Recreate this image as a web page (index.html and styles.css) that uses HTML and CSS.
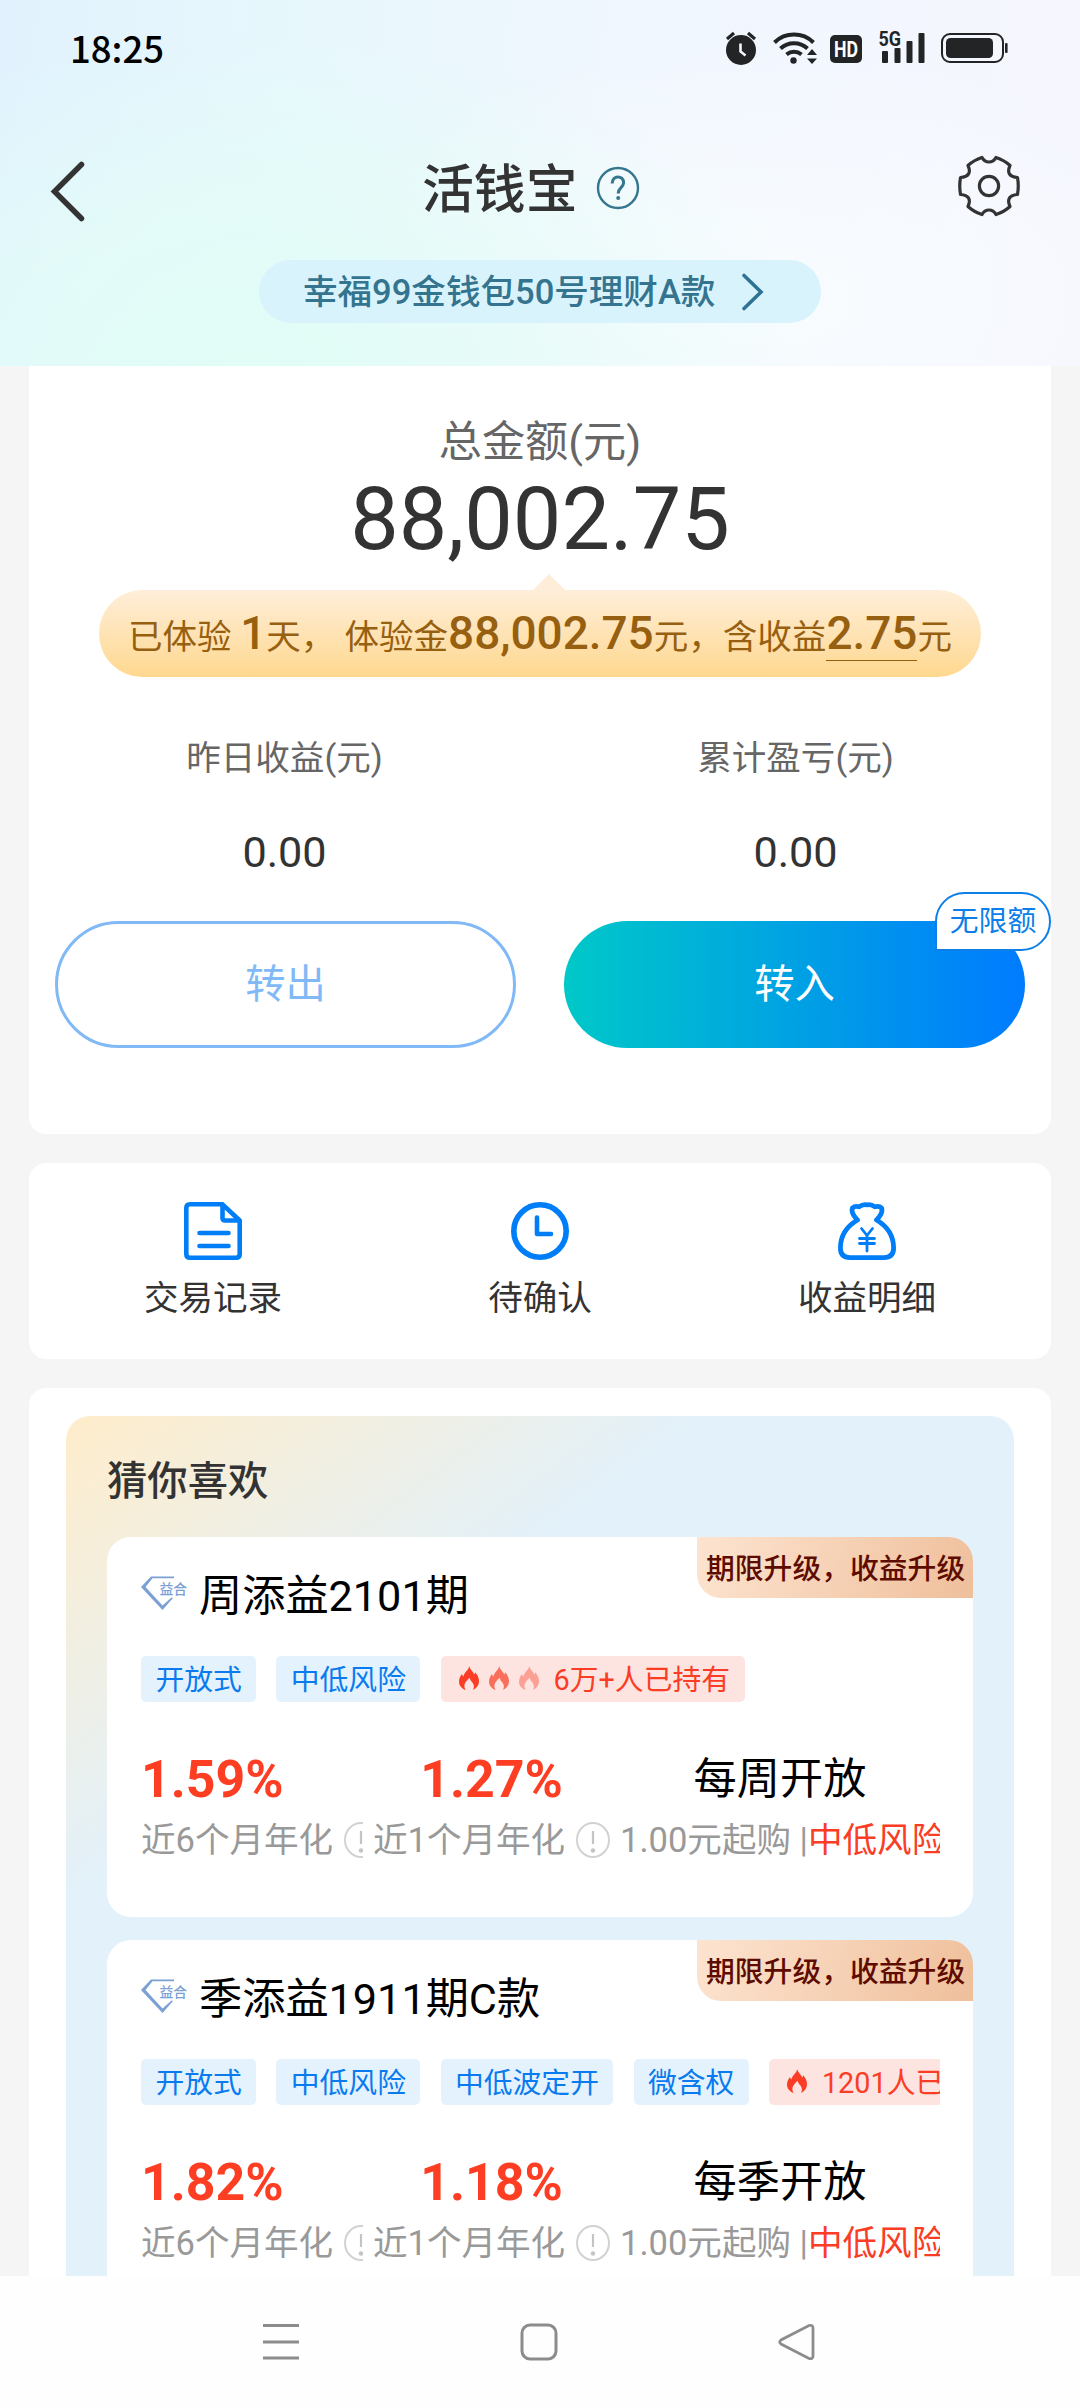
FILE: index.html
```html
<!DOCTYPE html>
<html lang="zh-CN">
<head>
<meta charset="utf-8">
<title>活钱宝</title>
<link rel="stylesheet" href="styles.css">
</head>
<body>
<svg class="defs" width="0" height="0" aria-hidden="true">
  <symbol id="flame" viewBox="0 0 20 24"><path d="M10.200 0C10.800 3.600 14.400 5.600 15.200 8.600C15.800 8 16 7.200 16 6.200C18.600 8.800 20 11.800 20 15C20 19.200 17.400 22.400 14 24C15.400 21.600 15.200 18.600 13.400 16.600C12.200 15.200 11 14.200 10.800 11.800C8.600 13.600 5.600 16.600 5.400 19.600C5.300 21.200 5.800 22.800 6.600 24C2.800 22.600 0 19.600 0 15.400C0 12.200 1.600 10 3 8C3.400 9.400 3.800 10 4.600 10.400C4.800 6.200 9.600 4.600 10.200 0Z" fill="currentColor"/></symbol>
  <symbol id="info" viewBox="0 0 34 36"><ellipse cx="17" cy="18" rx="16" ry="17" fill="none" stroke="#d2d2d2" stroke-width="2"/><path d="M17 9v13" stroke="#c4c4c4" stroke-width="2.200"/><circle cx="17" cy="28.500" r="2.200" fill="#c4c4c4"/></symbol>
  <symbol id="gem" viewBox="0 0 46 34"><path d="M33 0.500H10L0 11L21.500 34L32 22L30.500 21.500L21.500 29.500L4.500 11L11.500 2.300H33Z" fill="#7ba0d4"/><text x="18.500" y="17.500" class="gem-text">益合</text></symbol>
</svg>

<header class="header">
  <div class="status">
    <span class="clock">18:25</span>
    <svg class="status-icons" width="290" height="40" viewBox="722 28 290 40">
      <g fill="#222426">
        <circle cx="741" cy="50" r="15"/>
        <path d="M727 39l7-6M755 39l-7-6" stroke="#222426" stroke-width="3.200"/>
        <path d="M740.500 43.500v8l5 4" fill="none" stroke="#f3f8fe" stroke-width="2.600"/>
        <g fill="none" stroke="#222426" stroke-width="4">
          <path d="M774.500 42.500a28 28 0 0 1 39 0"/><path d="M780.500 48.500a20 20 0 0 1 27 0"/><path d="M786.500 54.500a12 12 0 0 1 15 0"/>
        </g>
        <circle cx="793.500" cy="60.500" r="3.200"/>
        <path d="M812 49l5 6h-10zM812 64l5-5.500h-10z"/>
        <rect x="830" y="35" width="32" height="28" rx="5"/>
        <rect x="882" y="51" width="6" height="12" rx="1"/><rect x="894.500" y="48" width="6" height="15" rx="1"/><rect x="906.500" y="41" width="6" height="22" rx="1"/><rect x="918.500" y="33" width="6" height="30" rx="1"/>
        <rect x="942" y="34" width="61" height="28" rx="8" fill="none" stroke="#222426" stroke-width="2"/>
        <rect x="946" y="38" width="47" height="20" rx="4.500"/>
        <rect x="1005" y="43" width="2.600" height="10" rx="1"/>
      </g>
      <text x="834" y="57" class="hd" textLength="24" lengthAdjust="spacingAndGlyphs">HD</text>
      <text x="878.500" y="46" class="fiveg" textLength="22.500" lengthAdjust="spacingAndGlyphs">5G</text>
    </svg>
  </div>
  <div class="titlebar">
    <svg class="back" width="40" height="66" viewBox="48 159 40 66"><path d="M81.500 164.500L54.500 191.500L81.500 218.500" fill="none" stroke="#333" stroke-width="5.500" stroke-linecap="round"/></svg>
    <h1 class="title">活钱宝</h1>
    <svg class="help" width="44" height="44" viewBox="0 0 44 44"><circle cx="22" cy="22" r="20" fill="none" stroke="#35768f" stroke-width="2.400"/><path d="M16.200 17.500C16 8.500 28 9 27.600 17C27.400 21.500 22.400 21.500 22.200 27.500" fill="none" stroke="#35768f" stroke-width="3"/><circle cx="22.200" cy="32" r="2" fill="#35768f"/></svg>
    <svg class="gear" width="64" height="64" viewBox="-32 -32 64 64"><g fill="none" stroke="#333" stroke-width="3.200" stroke-linejoin="round"><circle r="9.600"/><path d="M-7 -28.500Q-4.500 -24 0 -24T7 -28.500Q15 -26 21 -20.500Q18.500 -15 20.500 -12T28.500 -8.500Q30 0 28.500 8.500Q22.500 9 20.500 12T21 20.500Q15 26 7 28.500Q4.500 24 0 24T-7 28.500Q-15 26 -21 20.500Q-18.500 15 -20.500 12T-28.500 8.500Q-30 0 -28.500 -8.500Q-22.500 -9 -20.500 -12T-21 -20.500Q-15 -26 -7 -28.500Z"/></g></svg>
  </div>
  <div class="product-pill">
    <span>幸福99金钱包50号理财A款</span>
    <svg width="24" height="40" viewBox="0 0 24 40"><path d="M3 3.500L20 20L3 36.500" fill="none" stroke="#2f7394" stroke-width="3.600" stroke-linecap="round"/></svg>
  </div>
</header>

<main class="content">
  <section class="card balance">
    <div class="total-label">总金额(元)</div>
    <div class="total">88,002.75</div>
    <div class="bubble">
      <p>已体验 <b>1</b>天，<i></i>体验金<b>88,002.75</b>元，含收益<b class="under">2.75</b>元</p>
    </div>
    <div class="stats">
      <div><span class="stat-label">昨日收益(元)</span><span class="stat-value">0.00</span></div>
      <div><span class="stat-label">累计盈亏(元)</span><span class="stat-value">0.00</span></div>
    </div>
    <div class="actions">
      <div class="btn btn-out">转出</div>
      <div class="btn btn-in">转入<span class="limit">无限额</span></div>
    </div>
  </section>

  <section class="card menu">
    <div class="menu-item">
      <svg width="58" height="58" viewBox="0 0 58 58"><g fill="none" stroke="#007ef8" stroke-width="4.600" stroke-linejoin="round"><path d="M38 2.300H6Q2.300 2.300 2.300 6V52Q2.300 55.700 6 55.700H52Q55.700 55.700 55.700 52V18.500L38.500 2.300V16Q38.500 18.500 41 18.500H55"/><path d="M15.500 31H44.500M15.500 44H44.500" stroke-linecap="round"/></g></svg>
      <span>交易记录</span>
    </div>
    <div class="menu-item">
      <svg width="58" height="58" viewBox="0 0 58 58"><g fill="none" stroke="#007ef8"><circle cx="29" cy="29" r="26.200" stroke-width="5.600"/><path d="M26 15.500V32H40" stroke-width="4.600" stroke-linecap="round" stroke-linejoin="round"/></g></svg>
      <span>待确认</span>
    </div>
    <div class="menu-item">
      <svg width="58" height="58" viewBox="0 0 58 58"><g fill="none" stroke="#007ef8" stroke-width="4.800" stroke-linecap="round" stroke-linejoin="round"><path d="M19.500 18Q12.500 11 14.500 6Q17 3.500 21 4.800Q25 1.800 29 2.800Q33 1.800 37 4.800Q41 3.500 43.500 6Q45.500 11 38.500 18Q55.600 28 55.600 46Q55.600 55.600 46 55.600H12Q2.400 55.600 2.400 46Q2.400 28 19.500 18Z"/><path d="M23.500 26.500L29 33.500L34.500 26.500M29 33.500V49M21.500 36.500H36.500M21.500 41.500H36.500" stroke-width="2.800"/></g></svg>
      <span>收益明细</span>
    </div>
  </section>

  <section class="card recommend">
    <div class="panel">
      <h2 class="panel-title">猜你喜欢</h2>

      <article class="product">
        <div class="ribbon">期限升级，收益升级</div>
        <div class="name"><svg width="46" height="34"><use href="#gem"/></svg><span>周添益2101期</span></div>
        <div class="tags">
          <span class="tag">开放式</span><span class="tag">中低风险</span>
          <span class="tag hot"><svg class="flame"><use href="#flame"/></svg><svg class="flame f2"><use href="#flame"/></svg><svg class="flame f3"><use href="#flame"/></svg><span>6万+人已持有</span></span>
        </div>
        <div class="metrics">
          <div class="metric first"><b>1.59%</b><span class="cap">近6个月年化<svg class="info"><use href="#info"/></svg></span></div>
          <div class="metric"><b>1.27%</b><span class="cap">近1个月年化<svg class="info"><use href="#info"/></svg></span></div>
          <div class="metric"><em>每周开放</em><span class="cap">1.00元起购 |<span class="risk">中低风险</span></span></div>
        </div>
      </article>

      <article class="product">
        <div class="ribbon">期限升级，收益升级</div>
        <div class="name"><svg width="46" height="34"><use href="#gem"/></svg><span>季添益1911期C款</span></div>
        <div class="tags">
          <span class="tag">开放式</span><span class="tag">中低风险</span><span class="tag">中低波定开</span><span class="tag">微含权</span>
          <span class="tag hot"><svg class="flame"><use href="#flame"/></svg><span>1201人已持有</span></span>
        </div>
        <div class="metrics">
          <div class="metric first"><b>1.82%</b><span class="cap">近6个月年化<svg class="info"><use href="#info"/></svg></span></div>
          <div class="metric"><b>1.18%</b><span class="cap">近1个月年化<svg class="info"><use href="#info"/></svg></span></div>
          <div class="metric"><em>每季开放</em><span class="cap">1.00元起购 |<span class="risk">中低风险</span></span></div>
        </div>
      </article>
    </div>
  </section>
</main>

<nav class="navbar">
  <svg width="38" height="38" viewBox="0 0 38 38"><path d="M1 2.500H37M1 19H37M1 35H37" stroke="#8c8c8c" stroke-width="3"/></svg>
  <svg width="38" height="38" viewBox="0 0 38 38"><rect x="2" y="2" width="34" height="34" rx="8" fill="none" stroke="#8c8c8c" stroke-width="3"/></svg>
  <svg width="38" height="38" viewBox="0 0 38 38"><path d="M3 17Q0.500 19 3 21L31 35.500Q35 36.500 35 33V5Q35 1.500 31 2.500Z" fill="none" stroke="#8c8c8c" stroke-width="2.800"/></svg>
</nav>
</body>
</html>
```
FILE: styles.css
```css
* { box-sizing: border-box; margin: 0; padding: 0; }
body {
  width: 1080px;
  height: 2408px;
  overflow: hidden;
  display: flex;
  flex-direction: column;
  background: #f5f5f5;
  color: #333;
  font-family: Roboto, "Noto Sans CJK SC", sans-serif;
  font-size: 34.560px;
}
svg { display: block; flex: none; }
.defs { display: none; }

.header {
  height: 366px;
  flex: none;
  background:
    radial-gradient(ellipse 560px 340px at 250px 370px, #e1fdf6 0%, rgba(226, 253, 246, .6) 50%, rgba(226, 253, 246, 0) 100%),
    radial-gradient(ellipse 500px 260px at 760px 300px, #f8fcfe 0%, rgba(248, 252, 254, 0) 100%),
    linear-gradient(97deg, #e1f2fe 0%, #e6f7fc 25%, #f0f7fe 55%, #f6f6fe 100%);
}
.status {
  height: 100px;
  padding: 28px 68px 0 70px;
  display: flex;
  justify-content: space-between;
}
.clock {
  font-family: "Noto Sans CJK SC", sans-serif;
  font-weight: 500;
  font-size: 36.500px;
  line-height: 40px;
  color: #000;
}
.hd { font: 700 21.500px Roboto, sans-serif; fill: #fff; }
.fiveg { font: 700 20px Roboto, sans-serif; fill: #222426; }
.titlebar {
  height: 160px;
  padding: 0 59px 0 48px;
  display: grid;
  grid-template-columns: 374px 156px 62px 1fr;
  align-items: start;
}
.back { margin-top: 59px; }
.title { margin-top: 51px; font-size: 51.840px; line-height: 80px; font-weight: 500; white-space: nowrap; }
.help { margin: 66px 0 0 18px; }
.gear { margin: 54px 0 0; justify-self: end; }
.product-pill {
  width: 562px;
  height: 63px;
  margin-left: 259px;
  padding: 0 56px 0 44px;
  border-radius: 32px;
  background: #d9f3fd;
  color: #35748f;
  font-weight: 500;
  display: flex;
  align-items: center;
  justify-content: space-between;
  white-space: nowrap;
}
.product-pill span { margin-bottom: 6px; }

.content { height: 1910px; overflow: hidden; padding: 0 29px; display: flex; flex-direction: column; gap: 29px; }
.card { background: #fff; border-radius: 17px; flex: none; }
.balance { height: 768px; border-radius: 0 0 17px 17px; text-align: center; padding-top: 51px; }
.total-label { font-size: 43.200px; line-height: 52px; color: #666; }
.total { font-size: 86.400px; line-height: 101px; }
.bubble {
  position: relative;
  width: 882px;
  height: 87px;
  margin: 20px auto 0 70px;
  border-radius: 44px;
  background: linear-gradient(#feeed9, #ffd88f);
  color: #975f10;
}
.bubble::before {
  content: "";
  position: absolute;
  left: 433px;
  top: -16px;
  border: 17px solid transparent;
  border-top: 0;
  border-bottom: 17px solid #feeed9;
}
.bubble p { padding-left: 29px; text-align: left; line-height: 87px; white-space: nowrap; }
.bubble b { font-size: 45.900px; font-weight: 500; }
.bubble i { display: inline-block; width: 9px; }
.under { border-bottom: 1.500px solid #975f10; }
.stats { display: grid; grid-template-columns: 1fr 1fr; margin-top: 55px; }
.stat-label, .stat-value { display: block; }
.stat-label { line-height: 52px; color: #666; }
.stat-value { margin-top: 43px; font-size: 43.200px; line-height: 52px; }
.actions { display: flex; gap: 48px; padding: 0 26px; margin-top: 42px; }
.btn { width: 461px; height: 127px; border-radius: 64px; font-size: 40.320px; line-height: 127px; }
.btn-out { border: 3px solid #80b9f6; color: #80b9f6; line-height: 121px; }
.btn-in { position: relative; background: linear-gradient(90deg, #00c8c8, #007bff); color: #fff; }
.limit {
  position: absolute;
  right: -26px;
  top: -29px;
  width: 116px;
  height: 59px;
  border: 2px solid #0d7fe8;
  border-radius: 30px 30px 30px 0;
  background: #fff;
  color: #0d7fe8;
  font-size: 28.800px;
  line-height: 54px;
}

.menu { height: 196px; display: grid; grid-template-columns: 327px 327px 327px; justify-content: center; padding-top: 39px; }
.menu-item { display: flex; flex-direction: column; align-items: center; }
.menu-item span { margin-top: 12px; line-height: 52px; }

.recommend { height: 1000px; padding: 28px 37px 0; }
.panel {
  height: 972px;
  border-radius: 24px;
  padding: 37px 41px 0;
  background: linear-gradient(143deg, #ffedcb 0, #e3f1fa 385px);
}
.panel-title { font-size: 40.320px; line-height: 58px; font-weight: 500; }
.product {
  position: relative;
  height: 380px;
  margin: 26px 0 0;
  padding: 30px 33.500px 0 34px;
  background: #fff;
  border-radius: 24px;
  white-space: nowrap;
}
.product + .product { margin-top: 23px; }
.ribbon {
  position: absolute;
  right: 0;
  top: 0;
  width: 276px;
  height: 61px;
  padding-left: 9px;
  border-radius: 0 24px 0 24px;
  background: linear-gradient(110deg, #fde4d0, #efbf9b);
  color: #5e0b00;
  font-size: 28.800px;
  line-height: 64px;
  font-weight: 500;
}
.name { display: flex; align-items: center; gap: 12px; color: #000; font-size: 43.200px; line-height: 60px; }
.name svg { margin-top: -8px; }
.gem-text { font: 500 13.800px "Noto Sans CJK SC", sans-serif; fill: #7ba0d4; }
.tags { display: flex; gap: 20.200px; margin-top: 29px; height: 46px; overflow: hidden; }
.tag { flex: none; display: flex; align-items: center; height: 46px; padding: 0 14.400px 3px; border-radius: 5px; background: #e4f2fe; color: #0a7bee; font-size: 28.800px; }
.hot { padding: 0 15px 3px 18px; background: #fde4e1; color: #fa3d24; }
.flame { width: 20px; height: 24px; margin-right: 10px; }
.hot span { margin-left: 5px; }
.f2 { opacity: .7; }
.f3 { opacity: .4; }
.metrics { display: grid; grid-template-columns: 222px 237px 320px; gap: 10px; margin-top: 45px; }
.metric { display: flex; flex-direction: column; align-items: center; overflow: hidden; }
.metric.first { align-items: flex-start; }
.metric b { font-size: 51.840px; line-height: 66px; font-weight: 700; color: #fd3e23; }
.metric em { font-size: 43.200px; line-height: 66px; font-style: normal; color: #000; }
.cap { display: flex; align-items: center; align-self: flex-start; line-height: 54px; color: #999; }
.info { width: 34px; height: 36px; margin-left: 11px; }
.risk { color: #fa3d24; }

.navbar { height: 132px; flex: none; background: #fefefe; display: flex; justify-content: space-between; padding: 47px 264px 0 262px; }
```
